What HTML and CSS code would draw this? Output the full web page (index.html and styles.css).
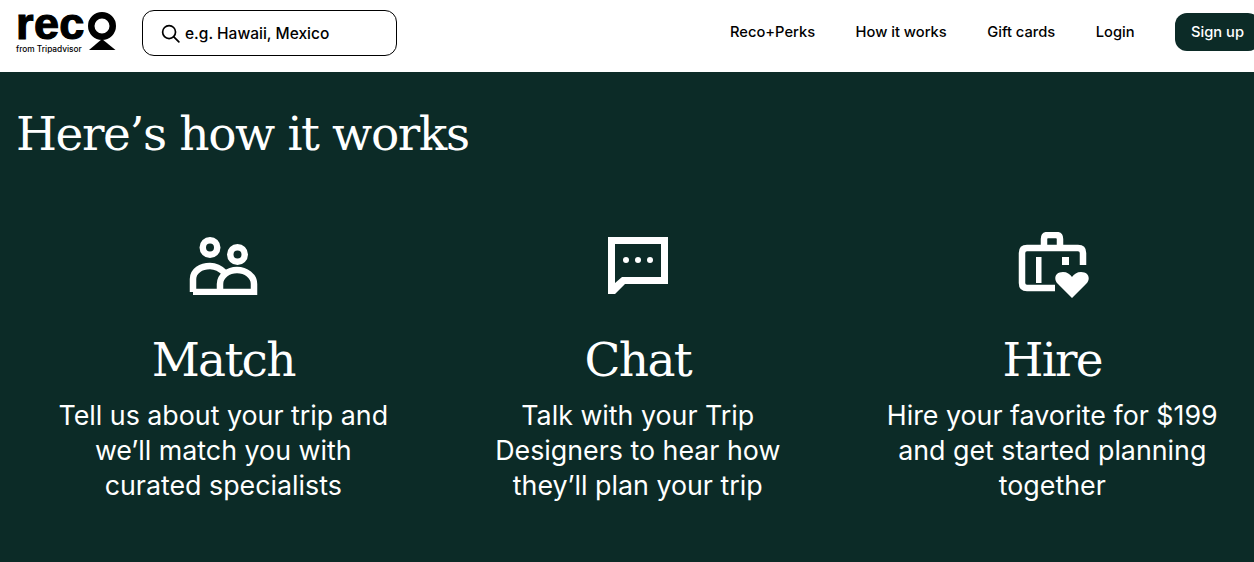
FILE: index.html
```html
<!DOCTYPE html>
<html lang="en">
<head>
    <meta charset="UTF-8">
    <meta name="viewport" content="width=device-width, initial-scale=1.0">
    <title>Reco from Tripadvisor</title>
    <link rel="stylesheet" href="styles.css">
</head>
<body>
    <div class="page">
        <header class="topbar">
            <a class="logo" href="#">
                <span class="logo-word">
                    <span class="logo-rec">rec</span>
                    <svg class="logo-o" viewBox="0 0 28 38" width="28" height="38" aria-hidden="true">
                        <circle cx="14" cy="14" r="10.750" fill="none" stroke="#000" stroke-width="6.500"/>
                        <path d="M14 27 L27.500 38 L1 38 Z" fill="#000"/>
                    </svg>
                </span>
                <span class="logo-from">from Tripadvisor</span>
            </a>
            <div class="search">
                <svg class="search-icon" viewBox="0 0 20 20" width="19" height="19" aria-hidden="true">
                    <circle cx="8.5" cy="8.5" r="6.800" fill="none" stroke="#000" stroke-width="1.8"/>
                    <path d="M13.500 13.500 L18.800 18.800" stroke="#000" stroke-width="1.8" stroke-linecap="round"/>
                </svg>
                <span class="search-text">e.g. Hawaii, Mexico</span>
            </div>
            <nav class="nav">
                <a href="#">Reco+Perks</a>
                <a href="#">How it works</a>
                <a href="#">Gift cards</a>
                <a href="#">Login</a>
                <a class="signup" href="#">Sign up</a>
            </nav>
        </header>

        <main class="how">
            <h1>Here’s how it works</h1>
            <div class="steps">
                <section class="step">
                    <div class="step-icon">
                        <svg viewBox="-2 0 70 60" width="70" height="60" aria-hidden="true">
                            <g fill="none" stroke="#fff" stroke-width="6.500">
                                <circle cx="20" cy="12.500" r="7.250"/>
                                <circle cx="47.500" cy="19.500" r="7.250"/>
                                <path d="M3 57 V44 C3 36 11 31 20 31 C26 31 31 34 35 38"/>
                                <path d="M30 57 V49 C30 41 38 35 47 35 C56 35 64 41 64 49 V57 Z"/>
                                <path d="M3 57 H30"/>
                            </g>
                        </svg>
                    </div>
                    <h2>Match</h2>
                    <p>Tell us about your trip and<br>we’ll match you with<br>curated specialists</p>
                </section>
                <section class="step">
                    <div class="step-icon">
                        <svg viewBox="0 0 60 57" width="60" height="57" aria-hidden="true">
                            <path fill="#fff" fill-rule="evenodd" d="M0 0 H60 V47 H17 L7 57 H0 Z M7 7 V46 L14 40 H53 V7 Z"/>
                            <circle cx="18" cy="23" r="3" fill="#fff"/>
                            <circle cx="30" cy="23" r="3" fill="#fff"/>
                            <circle cx="42" cy="23" r="3" fill="#fff"/>
                        </svg>
                    </div>
                    <h2>Chat</h2>
                    <p>Talk with your Trip<br>Designers to hear how<br>they’ll plan your trip</p>
                </section>
                <section class="step">
                    <div class="step-icon">
                        <svg viewBox="-4 0 74 66" width="74" height="66" aria-hidden="true">
                            <g fill="none" stroke="#fff" stroke-width="6.500">
                                <path d="M25 16 V7 Q25 3 29 3 H37 Q41 3 41 7 V16"/>
                                <path d="M36 56 H8 Q3 56 3 51 V21 Q3 16 8 16 H59 Q64 16 64 21 V33"/>
                            </g>
                            <rect x="17" y="25" width="5.500" height="26" fill="#fff"/>
                            <rect x="43" y="25" width="7" height="8" fill="#fff"/>
                            <path d="M53 66 L39 52 C34 47 36 40 44 40 C48 40 51 42 53 45 C55 42 58 40 62 40 C70 40 72 47 67 52 Z" fill="#fff"/>
                        </svg>
                    </div>
                    <h2>Hire</h2>
                    <p>Hire your favorite for $199<br>and get started planning<br>together</p>
                </section>
            </div>
        </main>
    </div>
</body>
</html>
```

FILE: styles.css
```css
html, body {
    margin: 0;
    padding: 0;
    height: 100%;
    overflow: hidden;
}
body {
    font-family: 'Inter', 'Liberation Sans', sans-serif;
    background-color: #0c2b27;
}
a {
    color: inherit;
    text-decoration: none;
}
.page {
    width: 1276px;
}

/* barra superior */
.topbar {
    display: flex;
    align-items: center;
    height: 72px;
    padding: 0 16px 6px;
    background-color: #fff;
    color: #000;
    box-sizing: border-box;
}
.logo {
    display: flex;
    flex-direction: column;
    width: 100px;
    margin-right: 26px;
}
.logo-word {
    display: flex;
    align-items: flex-start;
    justify-content: space-between;
    height: 32px;
}
.logo-rec {
    font-family: 'Liberation Sans', sans-serif;
    font-size: 45px;
    font-weight: 700;
    line-height: 24px;
    letter-spacing: 0.4px;
    -webkit-text-stroke: 1.2px #000;
}
.logo-o {
    flex-shrink: 0;
}
.logo-from {
    font-size: 8.300px;
    font-weight: 500;
    line-height: 10px;
}
.search {
    display: flex;
    align-items: center;
    gap: 5px;
    width: 255px;
    height: 46px;
    padding: 0 18px;
    border: 1px solid #000;
    border-radius: 12px;
    box-sizing: border-box;
}
.search-icon {
    flex-shrink: 0;
}
.search-text {
    font-size: 15.500px;
    font-weight: 500;
}
.nav {
    display: flex;
    align-items: center;
    gap: 40.500px;
    margin-left: auto;
    margin-top: -2px;
    font-size: 14.700px;
    font-weight: 500;
}
.signup {
    padding: 10px 16px;
    border-radius: 12px;
    background-color: #0c2b27;
    color: #fff;
}

/* como funciona */
.how {
    padding: 32px 16px 0;
    color: #fff;
}
.how h1 {
    margin: 0;
    font-family: 'DejaVu Serif', serif;
    font-size: 47px;
    font-weight: 400;
    line-height: 60px;
    letter-spacing: -1.4px;
}
.steps {
    display: grid;
    grid-template-columns: repeat(3, 414.5px);
    margin-top: 66px;
}
.step {
    display: flex;
    flex-direction: column;
    align-items: center;
    text-align: center;
}
.step-icon {
    display: flex;
    align-items: center;
    justify-content: center;
    height: 70px;
}
.step h2 {
    margin: 31px 0 0;
    font-family: 'DejaVu Serif', serif;
    font-size: 47px;
    font-weight: 400;
    line-height: 58px;
    letter-spacing: -1.700px;
}
.step p {
    margin: 9px 0 0;
    font-size: 26.800px;
    line-height: 35px;
}
```
